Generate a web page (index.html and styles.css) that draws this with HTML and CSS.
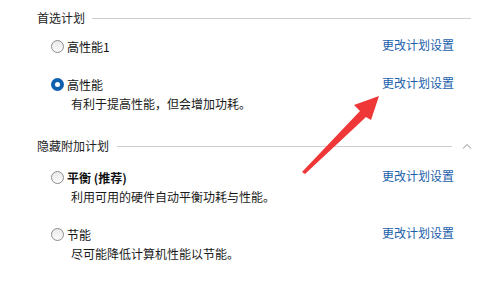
FILE: index.html
```html
<!DOCTYPE html>
<html lang="zh-CN">
<head>
<meta charset="utf-8">
<link rel="stylesheet" href="styles.css">
</head>
<body>
<div class="page">
  <section class="group">
    <div class="group-head">
      <span class="group-title">首选计划</span>
      <span class="rule"></span>
    </div>
    <div class="options">
      <div class="option">
        <div class="option-main">
          <div class="label-row"><span class="radio"></span><span class="label">高性能1</span></div>
        </div>
        <a class="link">更改计划设置</a>
      </div>
      <div class="option">
        <div class="option-main">
          <div class="label-row"><span class="radio checked"></span><span class="label">高性能</span></div>
          <div class="desc">有利于提高性能，但会增加功耗。</div>
        </div>
        <a class="link">更改计划设置</a>
      </div>
    </div>
  </section>
  <section class="group group-second">
    <div class="group-head">
      <span class="group-title">隐藏附加计划</span>
      <span class="rule short"></span>
      <svg class="chevron" width="10" height="6" viewBox="0 0 10 6"><polyline points="1,5.5 5,1.5 9,5.5" fill="none" stroke="#8a8a8a" stroke-width="1"/></svg>
    </div>
    <div class="options">
      <div class="option">
        <div class="option-main">
          <div class="label-row"><span class="radio"></span><span class="label bold">平衡 (推荐)</span></div>
          <div class="desc">利用可用的硬件自动平衡功耗与性能。</div>
        </div>
        <a class="link">更改计划设置</a>
      </div>
      <div class="option">
        <div class="option-main">
          <div class="label-row"><span class="radio"></span><span class="label">节能</span></div>
          <div class="desc">尽可能降低计算机性能以节能。</div>
        </div>
        <a class="link">更改计划设置</a>
      </div>
    </div>
  </section>
  <svg class="arrow" width="482" height="296" viewBox="0 0 482 296">
    <polygon points="302,172 305,174 366,117 371,120 379,96 354,105 360,111" fill="#ef3737"/>
  </svg>
</div>
</body>
</html>
```

FILE: styles.css
```css
html, body {
  margin: 0;
  padding: 0;
  background: #ffffff;
}
body {
  font-family: "Noto Sans CJK SC", "Microsoft YaHei", "Noto Sans", sans-serif;
  font-size: 12px;
  color: #000;
  width: 482px;
  height: 296px;
  overflow: hidden;
}
.page {
  position: relative;
  padding: 8px 11px 0 37px;
}
.group-head {
  display: flex;
  align-items: center;
  height: 20px;
}
.group-title {
  color: #222;
  line-height: 20px;
  white-space: nowrap;
}
.rule {
  flex: 1;
  height: 1px;
  background: #cfcfcf;
  margin-left: 7px;
}
.rule.short {
  margin-left: 8px;
}
.chevron {
  margin-left: 10px;
  margin-right: -1px;
  flex: none;
}
.options {
  display: flex;
  flex-direction: column;
  gap: 19px;
  margin-top: 9px;
  padding-left: 14px;
}
.group-second {
  margin-top: 23px;
}
.group-second .options {
  margin-top: 12px;
}
.option {
  display: flex;
  justify-content: space-between;
  align-items: flex-start;
  padding-right: 17px;
}
.label-row {
  display: flex;
  align-items: center;
  height: 19px;
}
.radio {
  box-sizing: border-box;
  width: 13px;
  height: 13px;
  border-radius: 50%;
  border: 1px solid #8c8c8c;
  background: linear-gradient(#e9e9e9, #fbfbfb);
  margin-right: 3px;
  flex: none;
}
.radio.checked {
  border: 4px solid #1060b0;
  background: #fff;
}
.label {
  line-height: 19px;
  color: #111;
}
.bold {
  font-weight: 700;
}
.desc {
  line-height: 19px;
  margin-left: 20px;
  color: #1a1a1a;
}
.link {
  color: #1c5fab;
  line-height: 19px;
  margin-top: -2px;
  white-space: nowrap;
}
.arrow {
  position: absolute;
  left: 0;
  top: 0;
  pointer-events: none;
}
```
